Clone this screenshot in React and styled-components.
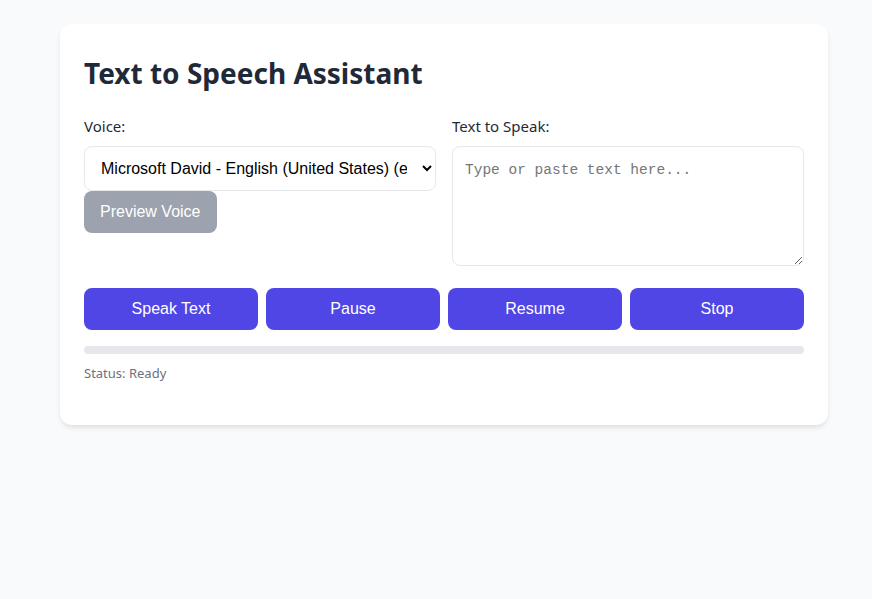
import React, { useState } from 'react'
import styled, { createGlobalStyle } from 'styled-components'

const GlobalStyle = createGlobalStyle`
  html, body {
    margin: 0;
    background: #f9fafb;
    font-family: "Noto Sans", "Open Sans", sans-serif;
    color: #1f2937;
  }
`

const Page = styled.div`
  padding: 24px 44px 24px 60px;
`

const Card = styled.div`
  background: #fff;
  border-radius: 12px;
  box-shadow: 0 4px 6px -1px rgba(0, 0, 0, 0.08), 0 2px 4px -1px rgba(0, 0, 0, 0.05);
  padding: 24px 24px 43px;
`

const Title = styled.h1`
  margin: 0 0 18px;
  font-size: 28px;
  line-height: 50px;
  font-weight: 700;
  color: #1f2937;
`

const Grid = styled.div`
  display: grid;
  grid-template-columns: 1fr 1fr;
  gap: 16px;
`

const Field = styled.div`
  display: flex;
  flex-direction: column;
  align-items: flex-start;
`

const Label = styled.label`
  font-size: 15px;
  line-height: 20px;
  margin-bottom: 10px;
  color: #1f2937;
`

const Select = styled.select`
  width: 100%;
  height: 45px;
  padding: 0 12px;
  border: 1px solid #e5e7eb;
  border-radius: 8px;
  background: #fff;
  font-family: "Liberation Sans", Arial, sans-serif;
  font-size: 16px;
  color: #000;
`

const TextArea = styled.textarea`
  width: 100%;
  box-sizing: border-box;
  height: 120px;
  padding: 15px 12px 12px;
  border: 1px solid #e5e7eb;
  border-radius: 8px;
  font-family: "Liberation Mono", monospace;
  font-size: 14.5px;
  &::placeholder {
    color: #767676;
  }
`

const Button = styled.button`
  border: none;
  border-radius: 8px;
  height: 42px;
  padding: 0 16px;
  background: ${p => (p.$muted ? '#9ca3af' : '#4f46e5')};
  color: #fff;
  font-family: "Liberation Sans", Arial, sans-serif;
  font-size: 16px;
  cursor: pointer;
`

const Controls = styled.div`
  display: grid;
  grid-template-columns: repeat(4, 1fr);
  gap: 8px;
  margin-top: 22px;
`

const Progress = styled.div`
  margin-top: 16px;
  height: 8px;
  border-radius: 4px;
  background: #e5e7eb;
  overflow: hidden;
`

const ProgressFill = styled.div`
  height: 100%;
  background: #4f46e5;
`

const Status = styled.div`
  margin-top: 10px;
  font-size: 13px;
  line-height: 18px;
  color: #6b7280;
`

export default function App() {
  const [text, setText] = useState('')
  const [progress] = useState(0)
  return (
    <>
      <GlobalStyle />
      <Page>
        <Card>
          <Title>Text to Speech Assistant</Title>
          <Grid>
            <Field>
              <Label>Voice:</Label>
              <Select defaultValue="david">
                <option value="david">Microsoft David - English (United States) (en-US)</option>
              </Select>
              <Button $muted>Preview Voice</Button>
            </Field>
            <Field>
              <Label>Text to Speak:</Label>
              <TextArea
                placeholder="Type or paste text here..."
                value={text}
                onChange={e => setText(e.target.value)}
              />
            </Field>
          </Grid>
          <Controls>
            <Button>Speak Text</Button>
            <Button>Pause</Button>
            <Button>Resume</Button>
            <Button>Stop</Button>
          </Controls>
          <Progress>
            <ProgressFill style={{ width: `${progress}%` }} />
          </Progress>
          <Status>Status: Ready</Status>
        </Card>
      </Page>
    </>
  )
}
